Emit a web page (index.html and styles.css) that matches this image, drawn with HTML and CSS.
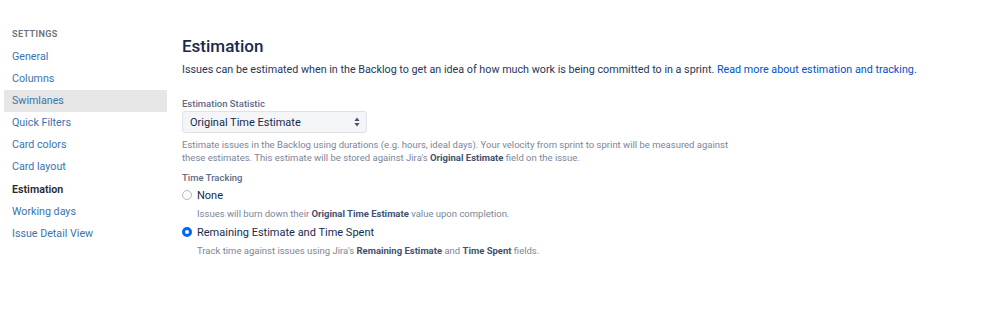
FILE: index.html
```html
<!DOCTYPE html>
<html lang="en">
<head>
  <meta charset="UTF-8" />
  <title>Board settings - Estimation</title>
  <link rel="stylesheet" href="styles.css">
</head>
<body>
  <div class="pagina">
    <aside class="menu">
      <h4 class="menu-titulo">SETTINGS</h4>
      <ul>
        <li><a href="#">General</a></li>
        <li><a href="#">Columns</a></li>
        <li class="hover"><a href="#">Swimlanes</a></li>
        <li><a href="#">Quick Filters</a></li>
        <li><a href="#">Card colors</a></li>
        <li><a href="#">Card layout</a></li>
        <li class="ativo"><a href="#">Estimation</a></li>
        <li><a href="#">Working days</a></li>
        <li><a href="#">Issue Detail View</a></li>
      </ul>
    </aside>

    <main class="conteudo">
      <h2>Estimation</h2>
      <p class="intro">Issues can be estimated when in the Backlog to get an idea of how much work is being committed to in a sprint. <a href="#">Read more about estimation and tracking.</a></p>

      <div class="campo">
        <label class="rotulo">Estimation Statistic</label>
        <div class="select">
          <span>Original Time Estimate</span>
          <svg width="6" height="10" viewBox="0 0 6 10"><path d="M3 0.5 L5.6 4 H0.4 Z M3 9.5 L5.6 6 H0.4 Z" fill="#42526e"/></svg>
        </div>
        <p class="ajuda">Estimate issues in the Backlog using durations (e.g. hours, ideal days). Your velocity from sprint to sprint will be measured against these estimates. This estimate will be stored against Jira's <b>Original Estimate</b> field on the issue.</p>
      </div>

      <div class="campo">
        <label class="rotulo">Time Tracking</label>
        <div class="opcao">
          <span class="radio"></span>
          <span class="opcao-texto">None</span>
        </div>
        <p class="ajuda recuo">Issues will burn down their <b>Original Time Estimate</b> value upon completion.</p>
        <div class="opcao">
          <span class="radio marcado"></span>
          <span class="opcao-texto">Remaining Estimate and Time Spent</span>
        </div>
        <p class="ajuda recuo">Track time against issues using Jira's <b>Remaining Estimate</b> and <b>Time Spent</b> fields.</p>
      </div>
    </main>
  </div>
</body>
</html>
```

FILE: styles.css
```css
* {
  box-sizing: border-box;
}

body {
  margin: 0;
  background: #ffffff;
  font-family: 'Roboto', 'Inter', sans-serif;
  color: #172b4d;
}

.pagina {
  display: flex;
  padding-top: 24px;
}

/* Menu lateral */
.menu {
  width: 167px;
  padding-left: 4px;
  flex-shrink: 0;
}

.menu-titulo {
  margin: 0 0 2px 8px;
  height: 20px;
  line-height: 20px;
  font-size: 9px;
  font-weight: 600;
  letter-spacing: 0.4px;
  color: #6b6f76;
}

.menu ul {
  list-style: none;
  margin: 0;
  padding: 0;
}

.menu li a {
  display: block;
  height: 22.1px;
  line-height: 22px;
  padding-left: 8px;
  font-size: 10.7px;
  color: #3b73af;
  text-decoration: none;
}

.menu li.hover a {
  background: #e6e6e6;
}

.menu li.ativo a {
  color: #262a30;
  font-weight: 600;
}

/* Conteudo */
.conteudo {
  padding-left: 15px;
  padding-top: 9px;
}

.conteudo h2 {
  margin: 0;
  font-size: 17px;
  line-height: 26px;
  font-weight: 500;
  color: #172b4d;
}

.intro {
  margin: 3px 0 0;
  font-size: 10.75px;
  line-height: 16px;
  color: #253858;
}

.intro a {
  color: #0052cc;
  text-decoration: none;
}

.campo {
  margin-top: 19px;
}

.campo + .campo {
  margin-top: 7px;
}

.rotulo {
  display: block;
  font-size: 9.5px;
  line-height: 14px;
  color: #5e6c84;
  font-weight: 500;
}

.select {
  display: flex;
  justify-content: space-between;
  align-items: center;
  width: 185px;
  height: 22px;
  padding: 0 6px 0 7px;
  background: #f4f5f7;
  border: 1px solid #dfe1e6;
  border-radius: 3px;
  font-size: 11px;
  color: #172b4d;
}

.ajuda {
  margin: 5px 0 0;
  width: 550px;
  font-size: 9.5px;
  line-height: 13px;
  color: #7a869a;
}

.ajuda b {
  color: #42526e;
  font-weight: 700;
}

.ajuda.recuo {
  margin-top: 4px;
  margin-left: 15px;
  width: auto;
}

.opcao {
  display: flex;
  align-items: center;
  gap: 5px;
  height: 16px;
  margin-top: 2px;
}

.ajuda + .opcao {
  margin-top: 4px;
}

.radio {
  width: 10px;
  height: 10px;
  border-radius: 50%;
  border: 1px solid #b3bac5;
  background: #fafbfc;
}

.radio.marcado {
  border: 3px solid #0065ff;
  background: #ffffff;
}

.opcao-texto {
  font-size: 11px;
  color: #172b4d;
}
```
